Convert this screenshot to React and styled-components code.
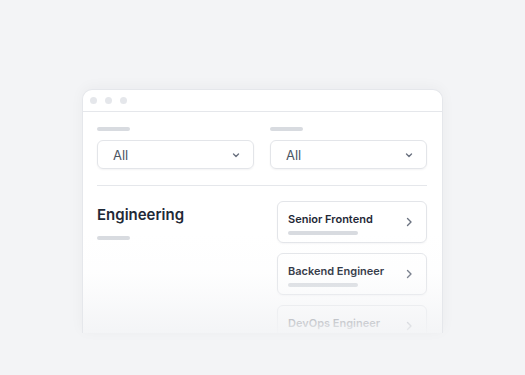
import React from "react";
import styled, { createGlobalStyle } from "styled-components";

const Global = createGlobalStyle`
  html, body { margin: 0; padding: 0; background: #f3f4f6; }
  body { font-family: Inter, "Noto Sans", sans-serif; -webkit-font-smoothing: antialiased; }
`;

const Page = styled.div`
  width: 525px;
  height: 375px;
  box-sizing: border-box;
  padding-top: 89px;
  display: flex;
  justify-content: center;
  overflow: hidden;
`;

const Window = styled.div`
  position: relative;
  width: 361px;
  height: 244px;
  box-sizing: border-box;
  background: #fff;
  border: 1px solid #e5e7eb;
  border-bottom: none;
  border-radius: 10px 10px 0 0;
  box-shadow: 0 -2px 14px rgba(17, 24, 39, 0.04);
  overflow: hidden;
`;

const TitleBar = styled.div`
  height: 21px;
  border-bottom: 1px solid #e5e7eb;
  display: flex;
  align-items: center;
  gap: 8px;
  padding-left: 7px;
`;

const Dot = styled.span`
  width: 7px;
  height: 7px;
  border-radius: 50%;
  background: #e5e7eb;
`;

const Body = styled.div`
  padding: 15px 15px 0 14px;
`;

const Filters = styled.div`
  display: grid;
  grid-template-columns: 1fr 1fr;
  gap: 16px;
`;

const Field = styled.div`
  display: flex;
  flex-direction: column;
  gap: 9px;
`;

const Bar = styled.div`
  width: ${(p) => p.$w}px;
  height: 4px;
  border-radius: 2px;
  background: #d8dbe0;
`;

const Select = styled.div`
  height: 29px;
  box-sizing: border-box;
  border: 1px solid #e3e5e9;
  border-radius: 6px;
  box-shadow: 0 1px 2px rgba(17, 24, 39, 0.05);
  display: flex;
  align-items: center;
  justify-content: space-between;
  padding: 0 12px 0 15px;
  font-size: 13px;
  color: #4b5563;
`;

const Divider = styled.div`
  height: 1px;
  background: #e5e7eb;
  margin: 16px 0 15px;
`;

const Lower = styled.div`
  display: grid;
  grid-template-columns: 1fr 150px;
  gap: 16px;
`;

const Group = styled.div`
  display: flex;
  flex-direction: column;
  gap: 12px;
  padding-top: 5px;
`;

const Heading = styled.div`
  font-size: 15px;
  font-weight: 600;
  color: #1f2937;
  line-height: 18px;
`;

const Cards = styled.div`
  display: flex;
  flex-direction: column;
  gap: 10px;
`;

const Card = styled.div`
  height: 42px;
  box-sizing: border-box;
  border: 1px solid #e3e5e9;
  border-radius: 6px;
  box-shadow: 0 1px 2px rgba(17, 24, 39, 0.04);
  display: flex;
  align-items: center;
  justify-content: space-between;
  padding: 0 12px 0 10px;
`;

const CardText = styled.div`
  display: flex;
  flex-direction: column;
  gap: 5px;
  margin-top: 3px;
`;

const CardTitle = styled.div`
  font-size: 11px;
  font-weight: 600;
  color: #1f2937;
  line-height: 13px;
`;

const Fade = styled.div`
  position: absolute;
  left: 0;
  right: 0;
  bottom: 0;
  height: 100px;
  background: linear-gradient(
    to bottom,
    rgba(243, 244, 246, 0) 0%,
    rgba(243, 244, 246, 0.1) 40%,
    rgba(243, 244, 246, 0.45) 65%,
    rgba(243, 244, 246, 0.75) 85%,
    rgba(243, 244, 246, 0.95) 100%
  );
  pointer-events: none;
`;

const ChevronDown = () => (
  <svg width="10" height="10" viewBox="0 0 10 10" fill="none">
    <path d="M2.5 4 L5 6.5 L7.5 4" stroke="#6b7280" strokeWidth="1.4" strokeLinecap="round" strokeLinejoin="round" />
  </svg>
);

const ChevronRight = () => (
  <svg width="10" height="12" viewBox="0 0 10 12" fill="none">
    <path d="M3.5 2.5 L7 6 L3.5 9.5" stroke="#6b7280" strokeWidth="1.4" strokeLinecap="round" strokeLinejoin="round" />
  </svg>
);

const jobs = ["Senior Frontend", "Backend Engineer", "DevOps Engineer"];

export default function App() {
  return (
    <>
      <Global />
      <Page>
        <Window>
          <TitleBar>
            <Dot />
            <Dot />
            <Dot />
          </TitleBar>
          <Body>
            <Filters>
              {[0, 1].map((i) => (
                <Field key={i}>
                  <Bar $w={33} />
                  <Select>
                    <span>All</span>
                    <ChevronDown />
                  </Select>
                </Field>
              ))}
            </Filters>
            <Divider />
            <Lower>
              <Group>
                <Heading>Engineering</Heading>
                <Bar $w={33} />
              </Group>
              <Cards>
                {jobs.map((j) => (
                  <Card key={j}>
                    <CardText>
                      <CardTitle>{j}</CardTitle>
                      <Bar $w={70} />
                    </CardText>
                    <ChevronRight />
                  </Card>
                ))}
              </Cards>
            </Lower>
          </Body>
          <Fade />
        </Window>
      </Page>
    </>
  );
}
